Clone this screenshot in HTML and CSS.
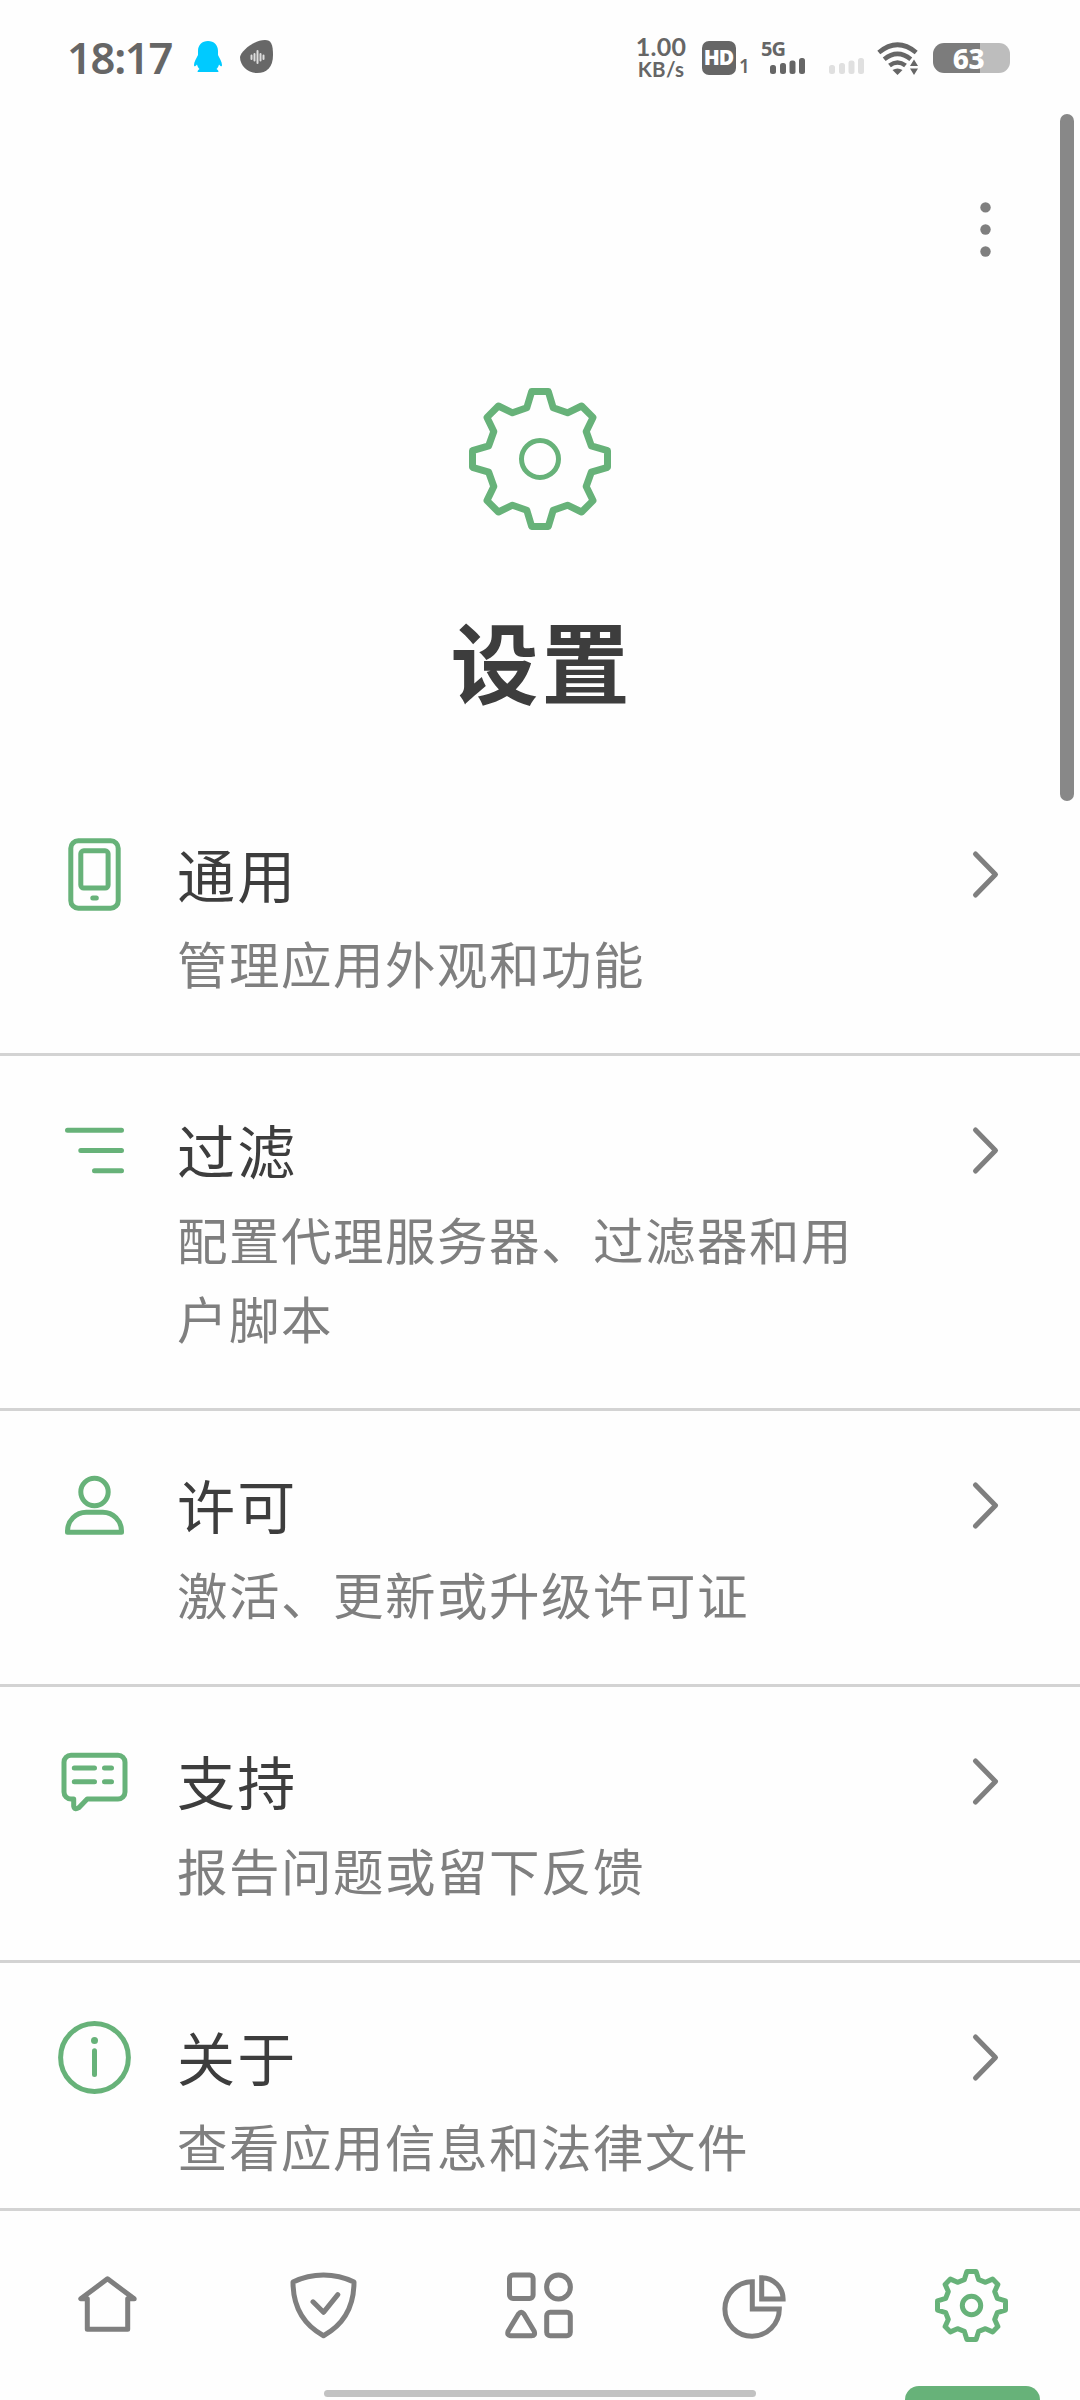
FILE: index.html
```html
<!DOCTYPE html>
<html lang="zh-CN">
<head>
<meta charset="utf-8">
<title>设置</title>
<link rel="stylesheet" href="styles.css">
</head>
<body>
<svg class="defs" aria-hidden="true">
  <symbol id="chevron" viewBox="0 0 81 81"><path d="M30.5 20L50.5 40.5L30.5 61"/></symbol>
  <symbol id="gear" viewBox="-71 -71 142 142"><path d="M-8.3-67.5H8.3L13.2-51.3L27.5-46.2L41.6-53L53-41.6L46.2-27.5L51.3-13.2L67.5-8.3V8.3L51.3 13.2L46.2 27.5L53 41.6L41.6 53L27.5 46.2L13.2 51.3L8.3 67.5H-8.3L-13.2 51.3L-27.5 46.2L-41.6 53L-53 41.6L-46.2 27.5L-51.3 13.2L-67.5 8.3V-8.3L-51.3-13.2L-46.2-27.5L-53-41.6L-41.6-53L-27.5-46.2L-13.2-51.3Z"/></symbol>
</svg>
<div class="screen">
  <header class="status">
    <span class="clock">18:17</span>
    <svg class="qq" width="30" height="32" viewBox="0 0 30 32"><path d="M15 0C21 0 25 4 25 10V14C26.500 17 29 21 29 24C29 26 27.500 25.500 26 23.500C25.500 26 24.500 27 23.500 28C25.500 29 26 31 25 31H5C4 31 4.500 29 6.500 28C5.500 27 4.500 26 4 23.500C2.500 25.500 1 26 1 24C1 21 3.500 17 5 14V10C5 4 9 0 15 0Z"/></svg>
    <svg class="blob" width="34" height="34" viewBox="0 0 34 34"><path class="blob-shape" d="M25 0C31 0 33 4 33 15C33 27 27 33 17 33C8 33 0 26 0 17C1 11 14 0 25 0Z"/><path class="wave" d="M11.500 15.500V19M14.500 14V20.500M17.500 11V23M20.500 14V20.500M23.500 15.500V19"/></svg>
    <div class="speed"><span class="rate">1.00</span><span class="unit">KB/s</span></div>
    <span class="hd">HD</span><span class="sim">1</span>
    <div class="cell"><span class="net">5G</span><svg class="bars" width="36" height="18" viewBox="0 0 36 18"><rect x="0" y="8" width="6" height="9" rx="2.500"/><rect x="10" y="6" width="6" height="11" rx="2.500"/><rect x="19.500" y="3.500" width="6" height="13.500" rx="2.500"/><rect x="29" y="1" width="6" height="16" rx="2.500"/></svg></div>
    <svg class="bars bars-off" width="36" height="18" viewBox="0 0 36 18"><rect x="0" y="8" width="6" height="9" rx="2.500"/><rect x="10" y="6" width="6" height="11" rx="2.500"/><rect x="19.500" y="3.500" width="6" height="13.500" rx="2.500"/><rect x="29" y="1" width="6" height="16" rx="2.500"/></svg>
    <svg class="wifi" width="42" height="34" viewBox="0 0 42 34"><path class="arc" d="M1.800 10.500Q20.500-5 39.200 10.500M7.200 17.200Q20.500 6.500 33.800 17.200M12.500 23.500Q20.500 17.500 28.500 23.500"/><path class="fill" d="M15.500 28Q20.500 25 25.500 28L20.500 33Z"/><path class="halo" d="M31 21H42V34H31Z"/><path class="fill" d="M33 24L37 17.500L41 24ZM33 26.500L37 33L41 26.500Z"/></svg>
    <div class="battery">63</div>
  </header>

  <main class="content">
    <div class="toolbar"><svg class="more" width="81" height="81" viewBox="0 0 81 81"><circle cx="40.500" cy="18.400" r="5.200"/><circle cx="40.500" cy="40.500" r="5.200"/><circle cx="40.500" cy="62.500" r="5.200"/></svg></div>
    <section class="hero">
      <svg class="hero-gear" width="142" height="142" viewBox="-71 -71 142 142"><use href="#gear" x="-71" y="-71" width="142" height="142"/><circle class="hub" r="18.500"/></svg>
      <h1>设置</h1>
    </section>
    <ul class="list">
      <li class="row">
        <svg class="icon" viewBox="0 0 81 81"><rect x="16.800" y="6.800" width="47.400" height="67.400" rx="7.500"/><rect x="26.800" y="16.800" width="27.300" height="37.300" rx="3"/><path d="M38.800 64H42.300"/></svg>
        <div class="text"><h2>通用</h2><p>管理应用外观和功能</p></div>
        <svg class="icon arrow"><use href="#chevron"/></svg>
      </li>
      <li class="row">
        <svg class="icon" viewBox="0 0 81 81"><path d="M13.500 20.200H67.500M26.800 40.500H67.500M40.500 60.700H67.500"/></svg>
        <div class="text"><h2>过滤</h2><p>配置代理服务器、过滤器和用户脚本</p></div>
        <svg class="icon arrow"><use href="#chevron"/></svg>
      </li>
      <li class="row">
        <svg class="icon" viewBox="0 0 81 81"><circle cx="40.500" cy="27" r="13.700"/><path d="M13.500 67.300V66A18.700 18.700 0 0 1 32.200 47.300H48.800A18.700 18.700 0 0 1 67.500 66V67.300Z"/></svg>
        <div class="text"><h2>许可</h2><p>激活、更新或升级许可证</p></div>
        <svg class="icon arrow"><use href="#chevron"/></svg>
      </li>
      <li class="row">
        <svg class="icon" viewBox="0 0 81 81"><path d="M17 14.300H64A7 7 0 0 1 71 21.300V51A7 7 0 0 1 64 58H33.200L24.800 66.700Q20.500 69.500 19.700 65V58H17A7 7 0 0 1 10 51V21.300A7 7 0 0 1 17 14.300ZM20.300 27H40.500M50.500 27H57.500M20.300 40.700H40.500M50.500 40.700H57.500"/></svg>
        <div class="text"><h2>支持</h2><p>报告问题或留下反馈</p></div>
        <svg class="icon arrow"><use href="#chevron"/></svg>
      </li>
      <li class="row">
        <svg class="icon" viewBox="0 0 81 81"><circle cx="40.500" cy="40.500" r="33.900"/><circle class="solid" cx="40.500" cy="23.500" r="3.500"/><path d="M40.500 33.800V57.500"/></svg>
        <div class="text"><h2>关于</h2><p>查看应用信息和法律文件</p></div>
        <svg class="icon arrow"><use href="#chevron"/></svg>
      </li>
    </ul>
  </main>

  <nav class="tabs">
    <a><svg class="icon" viewBox="0 0 81 81"><path d="M40.500 13.800L13.800 33.800H20.300V64.300H60.700V33.800H67.200Z"/></svg></a>
    <a><svg class="icon" viewBox="0 0 81 81"><path d="M10 17Q24.500 10 40.500 10T71 17C71 44 59 60.500 40.500 70.700C22 60.500 10 44 10 17ZM30 36.800L40.500 47.300L54.800 29.700"/></svg></a>
    <a><svg class="icon" viewBox="-0.700 0 81 81"><rect x="9.800" y="10" width="23.600" height="23.600" rx="3.500"/><circle cx="58.800" cy="22" r="11.900"/><path d="M18.800 49Q21.500 45.500 24.200 49L34.500 66.300Q36 70.700 31.800 70.700H11Q7 70.700 8.400 66.300Z"/><rect x="47" y="47.200" width="23.600" height="23.600" rx="3.500"/></svg></a>
    <a><svg class="icon pie" viewBox="-0.500 0 81 81"><path d="M36.800 16.800A27.200 27.200 0 1 0 63.800 44H36.800ZM46.200 12.700A21.500 21.500 0 0 1 67.600 34H46.200Z"/></svg></a>
    <a class="active"><svg class="tab-gear" viewBox="-36.500 -36.500 73 73"><path d="M-4.600-34H4.600L7.200-25.800L14-23.200L21.100-26.400L26.400-21.100L23.200-14L25.800-7.200L34-4.600V4.600L25.800 7.200L23.200 14L26.400 21.100L21.100 26.400L14 23.200L7.200 25.800L4.600 34H-4.600L-7.200 25.800L-14 23.200L-21.100 26.400L-26.400 21.100L-23.200 14L-25.800 7.200L-34 4.600V-4.600L-25.800-7.200L-23.200-14L-26.400-21.100L-21.100-26.400L-14-23.200L-7.200-25.800Z"/><circle r="9.200"/></svg></a>
  </nav>
  <div class="scrollbar"></div>
  <div class="home-bar"></div>
  <div class="fab"></div>
</div>
</body>
</html>
```
FILE: styles.css
```css
* { box-sizing: border-box; }
body { margin: 0; background: #fefefe; font-family: "Noto Sans CJK SC", sans-serif; }
h1, h2, p, ul { margin: 0; padding: 0; }
svg { display: block; flex: none; }
.defs { position: absolute; width: 0; height: 0; }
.screen { position: relative; width: 1080px; height: 2400px; overflow: hidden; display: flex; flex-direction: column; }

.status { flex: none; height: 114px; padding: 0 70px 0 67px; display: flex; align-items: center; color: #666; font-family: "Noto Sans", sans-serif; font-weight: 600; }
.status > * { flex: none; }
.clock { width: 126px; font-size: 43.5px; line-height: 58px; margin-top: -1px; font-weight: 600; letter-spacing: -1.3px; white-space: nowrap; }
.qq { fill: #00caff; margin-right: 17px; }
.blob-shape { fill: #676767; }
.wave { stroke: #ddd; stroke-width: 2; stroke-linecap: round; }
.speed { width: 54px; margin: -1px 14px 0 auto; display: flex; flex-direction: column; align-items: center; white-space: nowrap; font-family: Lato, sans-serif; }
.rate { font-size: 25px; line-height: 26px; font-weight: 700; letter-spacing: 0.3px; }
.unit { font-size: 20.5px; line-height: 21px; font-weight: 700; letter-spacing: 0.3px; }
.hd { width: 34px; height: 34px; margin-top: 2px; border-radius: 7px; background: #666; color: #fff; font-size: 21px; line-height: 33px; text-align: center; font-weight: 900; letter-spacing: -1px; text-indent: -1px; }
.sim { width: 25px; padding-left: 3px; margin-top: 18px; font-size: 19px; line-height: 20px; }
.cell { width: 45px; height: 34px; margin-right: 23px; display: flex; flex-direction: column; }
.net { font-size: 20px; line-height: 19px; height: 18px; margin-top: -1px; font-weight: 700; letter-spacing: -1px; }
.cell .bars { margin-left: 9px; }
.bars { fill: #666; }
.bars-off { fill: #e0e0e0; margin: 17px 12px 0 0; }
.wifi { margin: 4px 14px 0 0; }
.arc { fill: none; stroke: #666; stroke-width: 4.6; }
.halo { fill: #fefefe; }
.fill { fill: #666; }
.battery { width: 77px; height: 30px; margin-top: 2px; border-radius: 11px; background: linear-gradient(90deg, #7c7c7c 47px, #bdbdbd 47px); color: #fff; font-size: 28px; line-height: 30px; text-align: center; padding-right: 6px; font-weight: 800; letter-spacing: -0.5px; }

.content { flex: 1; min-height: 0; overflow: hidden; }
.toolbar { height: 156px; padding: 75px 54px 0 0; display: flex; justify-content: flex-end; }
.more { fill: #7f7f7f; }
.hero { height: 510px; padding-top: 118px; display: flex; flex-direction: column; align-items: center; }
.hero-gear { fill: none; stroke: #67b279; stroke-width: 7; stroke-linejoin: round; }
.hub { stroke-width: 5; }
.hero h1 { margin-top: 69px; font-size: 88px; line-height: 120px; font-weight: 700; letter-spacing: 3px; padding-left: 3px; color: #3d3d3d; }

.list { list-style: none; }
.row { display: flex; align-items: flex-start; gap: 42px; padding: 54px 54px 51px; border-bottom: 3px solid #d3d3d3; }
.icon { width: 81px; height: 81px; fill: none; stroke: #67b279; stroke-width: 5; stroke-linecap: round; stroke-linejoin: round; }
.arrow { stroke: #7f7f7f; }
.solid { fill: #67b279; stroke: none; }
.text { width: 715px; margin: -1px auto 0 0; }
.row h2 { font-size: 58px; line-height: 80px; font-weight: 400; letter-spacing: 2.2px; color: #3d3d3d; }
.row p { margin-top: 10px; font-size: 50.5px; line-height: 79px; letter-spacing: 1.5px; color: #7f7f7f; }

.tabs { flex: none; height: 192px; padding: 54px 1px 0 0; border-top: 3px solid #d3d3d3; display: grid; grid-template-columns: repeat(5, 1fr); justify-items: center; }
.tabs .icon { stroke: #7f7f7f; }
.tabs .pie { stroke-linejoin: miter; }
.tab-gear { width: 73px; height: 73px; margin-top: 4px; fill: none; stroke: #67b279; stroke-width: 5; stroke-linejoin: round; }

.scrollbar { position: absolute; left: 1060px; top: 114px; width: 14px; height: 687px; border-radius: 7px; background: #888; }
.home-bar { position: absolute; left: 324px; bottom: 3px; width: 432px; height: 7px; border-radius: 4px; background: #c2c2c2; }
.fab { position: absolute; left: 905px; bottom: -40px; width: 135px; height: 54px; border-radius: 14px; background: #67b279; }
```
